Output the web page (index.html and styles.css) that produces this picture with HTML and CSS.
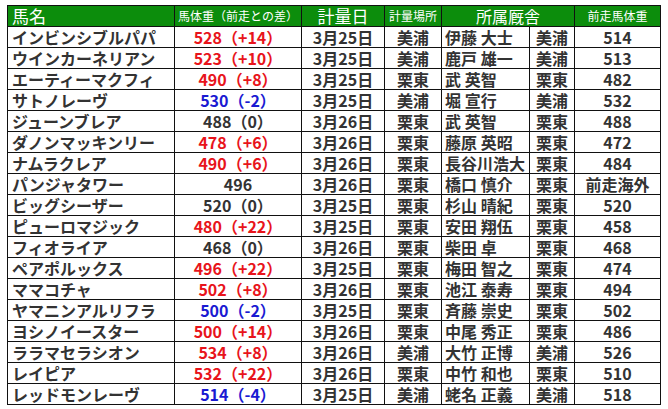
FILE: index.html
```html
<!DOCTYPE html>
<html lang="ja">
<head>
<meta charset="utf-8">
<title>馬体重</title>
<link rel="stylesheet" href="styles.css">
</head>
<body>
<table class="wt">
  <colgroup>
    <col class="c-name"><col class="c-wt"><col class="c-date"><col class="c-place"><col class="c-jockey"><col class="c-stable"><col class="c-prev">
  </colgroup>
  <thead>
    <tr>
      <th class="h-name">馬名</th>
      <th class="h-small">馬体重（前走との差）</th>
      <th class="h-big">計量日</th>
      <th class="h-small">計量場所</th>
      <th class="h-mid" colspan="2">所属厩舎</th>
      <th class="h-small">前走馬体重</th>
    </tr>
  </thead>
  <tbody>
    <tr><td class="name">インビンシブルパパ</td><td class="ctr up">528（+14）</td><td class="ctr">3月25日</td><td class="ctr">美浦</td><td class="trainer">伊藤 大士</td><td class="ctr">美浦</td><td class="ctr">514</td></tr>
    <tr><td class="name">ウインカーネリアン</td><td class="ctr up">523（+10）</td><td class="ctr">3月25日</td><td class="ctr">美浦</td><td class="trainer">鹿戸 雄一</td><td class="ctr">美浦</td><td class="ctr">513</td></tr>
    <tr><td class="name">エーティーマクフィ</td><td class="ctr up">490（+8）</td><td class="ctr">3月25日</td><td class="ctr">栗東</td><td class="trainer">武 英智</td><td class="ctr">栗東</td><td class="ctr">482</td></tr>
    <tr><td class="name">サトノレーヴ</td><td class="ctr down">530（-2）</td><td class="ctr">3月25日</td><td class="ctr">美浦</td><td class="trainer">堀 宣行</td><td class="ctr">美浦</td><td class="ctr">532</td></tr>
    <tr><td class="name">ジューンブレア</td><td class="ctr">488（0）</td><td class="ctr">3月26日</td><td class="ctr">栗東</td><td class="trainer">武 英智</td><td class="ctr">栗東</td><td class="ctr">488</td></tr>
    <tr><td class="name">ダノンマッキンリー</td><td class="ctr up">478（+6）</td><td class="ctr">3月26日</td><td class="ctr">栗東</td><td class="trainer">藤原 英昭</td><td class="ctr">栗東</td><td class="ctr">472</td></tr>
    <tr><td class="name">ナムラクレア</td><td class="ctr up">490（+6）</td><td class="ctr">3月26日</td><td class="ctr">栗東</td><td class="trainer">長谷川浩大</td><td class="ctr">栗東</td><td class="ctr">484</td></tr>
    <tr><td class="name">パンジャタワー</td><td class="ctr">496</td><td class="ctr">3月26日</td><td class="ctr">栗東</td><td class="trainer">橋口 慎介</td><td class="ctr">栗東</td><td class="ctr">前走海外</td></tr>
    <tr><td class="name">ビッグシーザー</td><td class="ctr">520（0）</td><td class="ctr">3月25日</td><td class="ctr">栗東</td><td class="trainer">杉山 晴紀</td><td class="ctr">栗東</td><td class="ctr">520</td></tr>
    <tr><td class="name">ピューロマジック</td><td class="ctr up">480（+22）</td><td class="ctr">3月25日</td><td class="ctr">栗東</td><td class="trainer">安田 翔伍</td><td class="ctr">栗東</td><td class="ctr">458</td></tr>
    <tr><td class="name">フィオライア</td><td class="ctr">468（0）</td><td class="ctr">3月26日</td><td class="ctr">栗東</td><td class="trainer">柴田 卓</td><td class="ctr">栗東</td><td class="ctr">468</td></tr>
    <tr><td class="name">ペアポルックス</td><td class="ctr up">496（+22）</td><td class="ctr">3月25日</td><td class="ctr">栗東</td><td class="trainer">梅田 智之</td><td class="ctr">栗東</td><td class="ctr">474</td></tr>
    <tr><td class="name">ママコチャ</td><td class="ctr up">502（+8）</td><td class="ctr">3月26日</td><td class="ctr">栗東</td><td class="trainer">池江 泰寿</td><td class="ctr">栗東</td><td class="ctr">494</td></tr>
    <tr><td class="name">ヤマニンアルリフラ</td><td class="ctr down">500（-2）</td><td class="ctr">3月25日</td><td class="ctr">栗東</td><td class="trainer">斉藤 崇史</td><td class="ctr">栗東</td><td class="ctr">502</td></tr>
    <tr><td class="name">ヨシノイースター</td><td class="ctr up">500（+14）</td><td class="ctr">3月26日</td><td class="ctr">栗東</td><td class="trainer">中尾 秀正</td><td class="ctr">栗東</td><td class="ctr">486</td></tr>
    <tr><td class="name">ララマセラシオン</td><td class="ctr up">534（+8）</td><td class="ctr">3月26日</td><td class="ctr">美浦</td><td class="trainer">大竹 正博</td><td class="ctr">美浦</td><td class="ctr">526</td></tr>
    <tr><td class="name">レイピア</td><td class="ctr up">532（+22）</td><td class="ctr">3月26日</td><td class="ctr">栗東</td><td class="trainer">中竹 和也</td><td class="ctr">栗東</td><td class="ctr">510</td></tr>
    <tr><td class="name">レッドモンレーヴ</td><td class="ctr down">514（-4）</td><td class="ctr">3月25日</td><td class="ctr">美浦</td><td class="trainer">蛯名 正義</td><td class="ctr">美浦</td><td class="ctr">518</td></tr>
  </tbody>
</table>
</body>
</html>
```
FILE: styles.css
```css
html, body {
  margin: 0;
  background: #ffffff;
}
body {
  padding: 5px 0 0 7px;
  font-family: "Noto Sans CJK JP", "Noto Sans", sans-serif;
  color: #333333;
}
.wt {
  border-collapse: collapse;
  table-layout: fixed;
  width: 654px;
}
.c-name { width: 167px; }
.c-wt { width: 127px; }
.c-date { width: 83px; }
.c-place { width: 57px; }
.c-jockey { width: 88px; }
.c-stable { width: 45px; }
.c-prev { width: 86px; }

.wt th, .wt td {
  border: 1px solid #111111;
  padding: 0;
  height: 20px;
  white-space: nowrap;
}
.wt th {
  background: #0c8d0c;
  color: #ffffff;
  font-weight: 400;
  text-align: center;
  line-height: 20px;
}
.wt th.h-name {
  text-align: left;
  padding-left: 4px;
  font-size: 17px;
}
.wt th.h-small { font-size: 12px; }
.wt th.h-big { font-size: 17px; }
.wt th.h-mid { font-size: 16px; }

.wt td {
  font-size: 16px;
  font-weight: 700;
  line-height: 20px;
}
.wt td.name { padding-left: 4px; }
.wt td.trainer { padding-left: 3px; }
.wt td.ctr { text-align: center; }
.wt td.up { color: #e8141b; }
.wt td.down { color: #1a1ad2; }
```
